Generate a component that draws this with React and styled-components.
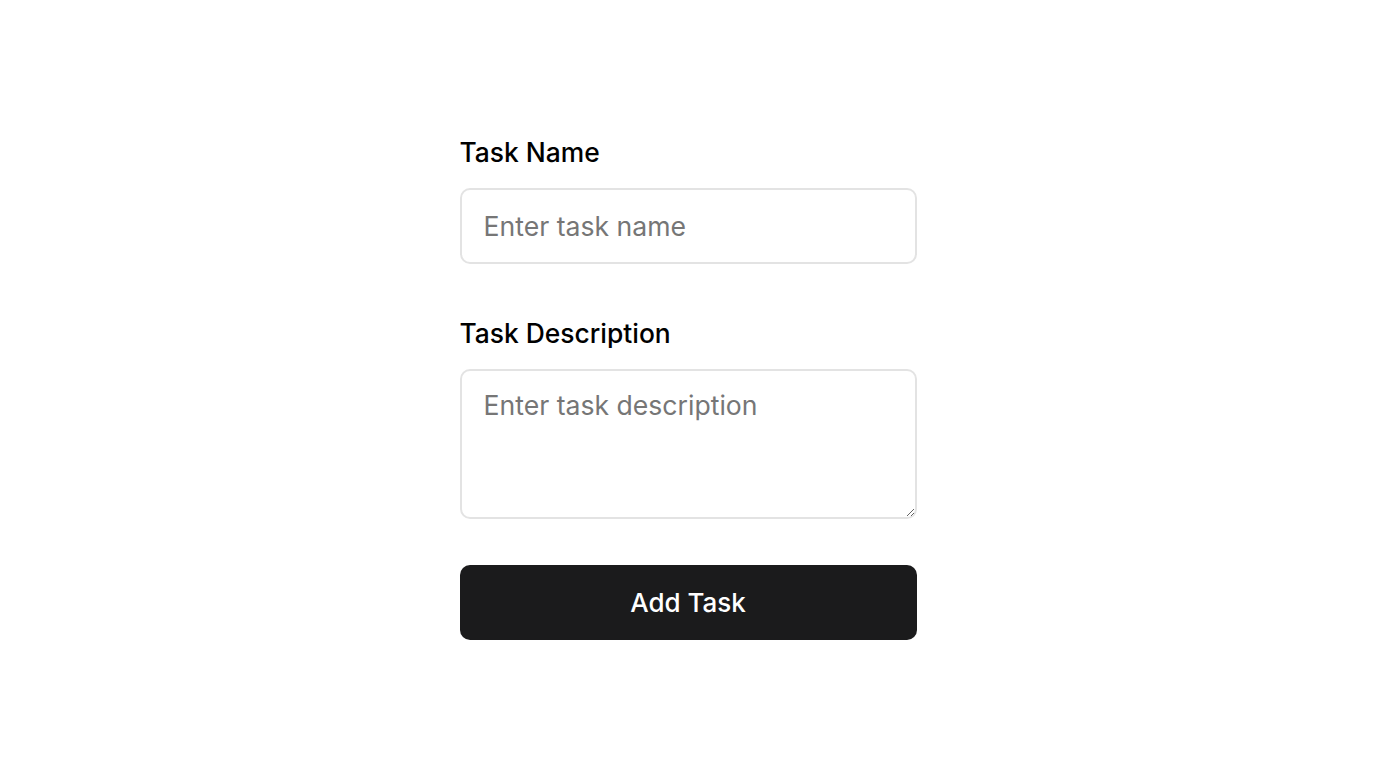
import React from "react";
import styled, { createGlobalStyle } from "styled-components";

const Global = createGlobalStyle`
  * { box-sizing: border-box; }
  body { margin: 0; background: #ffffff; font-family: Inter, "Noto Sans", sans-serif; }
`;

const Page = styled.main`
  min-height: 100vh;
  display: flex;
  justify-content: center;
  padding-top: 132px;
`;

const Form = styled.form`
  width: 457px;
  display: flex;
  flex-direction: column;
`;

const Field = styled.div`
  display: flex;
  flex-direction: column;
  margin-bottom: ${(p) => p.$mb}px;
`;

const Label = styled.label`
  font-size: 26.4px;
  line-height: 40px;
  font-weight: 500;
  color: #000;
  margin-bottom: 16px;
`;

const inputStyles = `
  width: 100%;
  font-family: Inter, "Noto Sans", sans-serif;
  font-size: 26.6px;
  line-height: 36px;
  color: #111;
  border: 2px solid #e3e3e3;
  border-radius: 10px;
  padding: 18px 22px;
  background: #fff;
  outline: none;
  display: block;
  &::placeholder { color: #767676; }
`;

const Input = styled.input`
  ${inputStyles}
  height: 76px;
`;

const TextArea = styled.textarea`
  ${inputStyles}
  height: 150px;
  padding-top: 16px;
  resize: vertical;
`;

const Button = styled.button`
  width: 100%;
  height: 75px;
  border: none;
  border-radius: 10px;
  background: #1b1b1c;
  color: #fff;
  font-family: Inter, "Noto Sans", sans-serif;
  font-size: 26px;
  font-weight: 500;
  cursor: pointer;
`;

export default function App() {
  return (
    <>
      <Global />
      <Page>
        <Form onSubmit={(e) => e.preventDefault()}>
          <Field $mb={49}>
            <Label htmlFor="name">Task Name</Label>
            <Input id="name" placeholder="Enter task name" />
          </Field>
          <Field $mb={46}>
            <Label htmlFor="desc">Task Description</Label>
            <TextArea id="desc" placeholder="Enter task description" />
          </Field>
          <Button type="submit">Add Task</Button>
        </Form>
      </Page>
    </>
  );
}
